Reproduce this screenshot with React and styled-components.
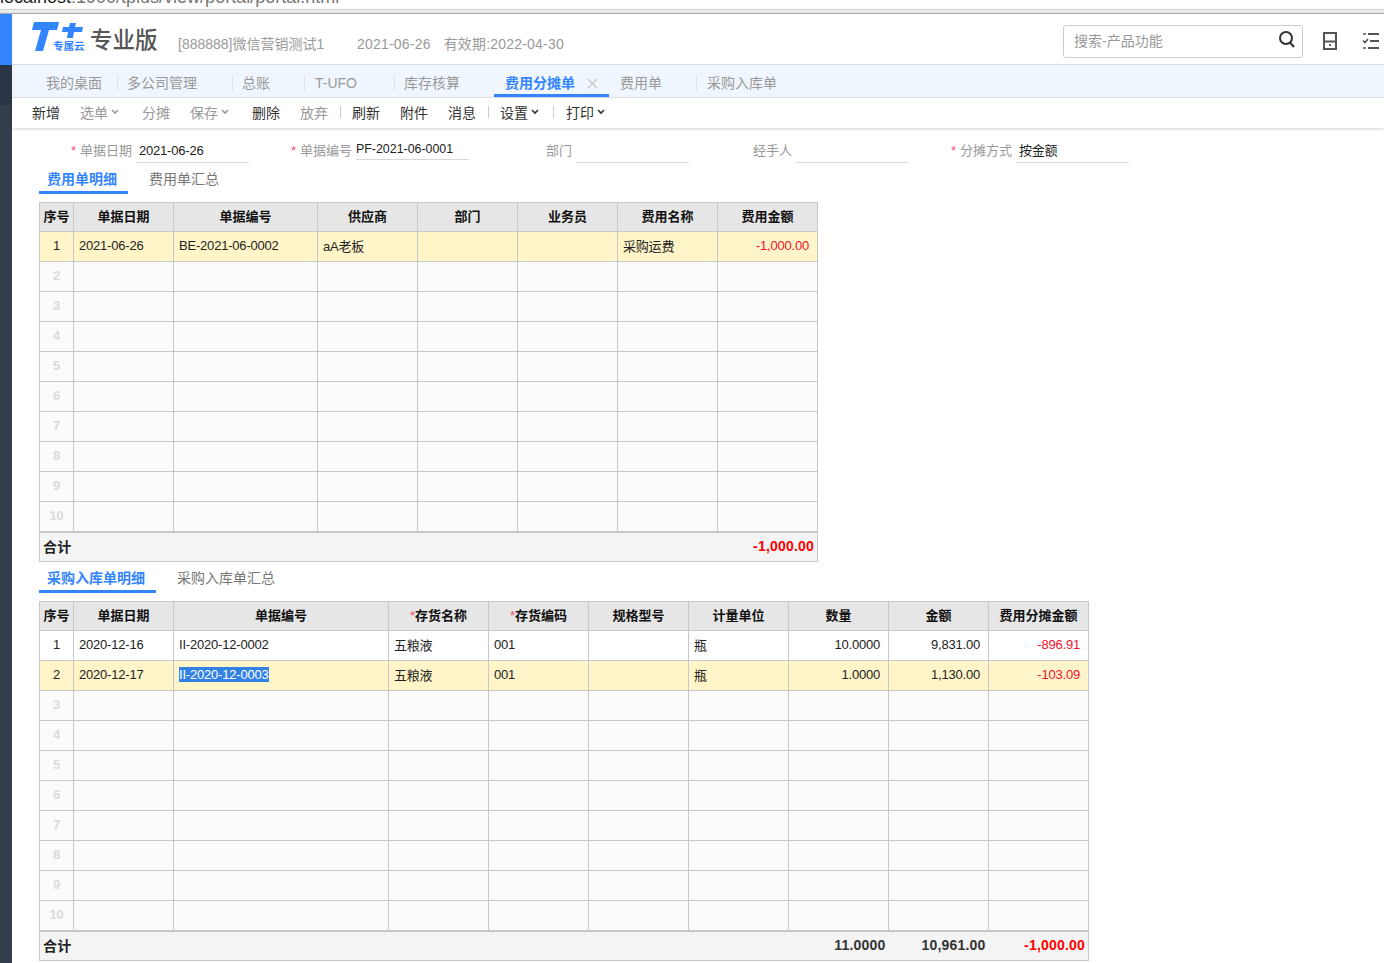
import styled, { createGlobalStyle } from 'styled-components';

const GlobalStyle = createGlobalStyle`
  html, body {
    margin: 0;
    padding: 0;
    background: #fff;
    overflow: hidden;
  }
  body {
    font-family: 'Liberation Sans', 'Noto Sans CJK SC', sans-serif;
    font-size: 13px;
    color: #333;
  }
`;

const UrlBar = styled.div`
  height: 9px;
  overflow: hidden;
  font-size: 18px;
  line-height: 18px;
  color: #777;
  white-space: nowrap;
  border-bottom: 1px solid #cfcfcf;
  b {
    font-weight: normal;
    color: #222;
  }
`;

const UrlText = styled.div`
  margin-top: -12px;
`;

const UrlShade = styled.div`
  height: 4px;
  background: linear-gradient(#f0f0f0, #e2e2e2);
  border-bottom: 1px solid #aaa;
  box-sizing: border-box;
`;

const Shell = styled.div`
  display: flex;
  height: 949px;
  overflow: hidden;
`;

const Rail = styled.div`
  width: 12px;
  flex: none;
  background: linear-gradient(
    #3385ff 0 51px,
    #2a3646 51px 91px,
    #343f4d 91px
  );
`;

const Main = styled.div`
  flex: 1;
  min-width: 0;
`;

const Header = styled.div`
  height: 51px;
  padding-bottom: 1px;
  display: flex;
  align-items: center;
  box-sizing: border-box;
  border-bottom: 1px solid #dcdcdc;
`;

const Logo = styled.div`
  width: 60px;
  height: 36px;
  margin: -2px 0 0 19px;
  flex: none;
`;

const Edition = styled.div`
  font-size: 22.5px;
  font-weight: 500;
  color: #555;
  width: 87px;
  flex: none;
  margin-top: -1px;
  margin-left: -1px;
  margin-right: 1px;
  white-space: nowrap;
`;

const Company = styled.div`
  font-size: 14px;
  color: #9a9a9a;
  width: 179px;
  flex: none;
  margin-top: 8px;
`;

const DateInfo = styled.div`
  font-size: 14px;
  letter-spacing: 0.2px;
  color: #999;
  flex: 1;
  margin-top: 8px;
  span {
    margin-left: 13px;
  }
`;

const Search = styled.div`
  width: 240px;
  height: 33px;
  flex: none;
  box-sizing: border-box;
  border: 1px solid #ccc;
  border-radius: 3px;
  display: flex;
  align-items: center;
  justify-content: space-between;
  padding: 0 5px 3px 10px;
  font-size: 14px;
  color: #999;
  margin-top: 6px;
`;

const HeaderIcons = styled.div`
  display: flex;
  align-items: center;
  gap: 24px;
  width: 62px;
  margin-left: 19px;
  margin-top: 4px;
  flex: none;
  overflow: hidden;
`;

const Tabs = styled.div`
  height: 33px;
  display: flex;
  align-items: stretch;
  background: #f0f6fd;
  border-bottom: 1px solid #dfe5ec;
  box-sizing: border-box;
  padding-left: 34px;
`;

const Tab = styled.div`
  width: ${p => p.$w}px;
  flex: none;
  box-sizing: border-box;
  font-size: 14px;
  line-height: 36px;
  color: ${p => (p.$active ? '#3385ff' : '#999')};
  font-weight: ${p => (p.$active ? 'bold' : 'normal')};
  padding-left: ${p => p.$pad || 0}px;
  position: relative;
  border-bottom: ${p => (p.$active ? '3px solid #3385ff' : 'none')};
  &::after {
    content: '';
    display: ${p => (p.$sep ? 'block' : 'none')};
    position: absolute;
    right: 0;
    top: 10px;
    height: 16px;
    width: 1px;
    background: #dfe3e8;
  }
`;

const CloseMark = styled.span`
  position: absolute;
  right: 11px;
  top: 13px;
  line-height: 0;
`;

const Toolbar = styled.div`
  height: 30px;
  box-sizing: border-box;
  padding: 0 0 2px 20px;
  display: flex;
  align-items: center;
  box-shadow: 0 1px 3px rgba(0, 0, 0, 0.18);
  font-size: 14px;
  color: #333;
  position: relative;
`;

const ToolItem = styled.div`
  display: flex;
  align-items: center;
  gap: 3px;
  margin-right: ${p => p.$gap}px;
  color: ${p => (p.$off ? '#999' : '#333')};
`;

const ToolSep = styled.div`
  width: 1px;
  height: 12px;
  background: #ccc;
  margin-right: ${p => p.$gap}px;
`;

const Content = styled.div`
  padding: 14px 0 0 27px;
`;

const FormRow = styled.div`
  display: flex;
  height: 22px;
`;

const Field = styled.div`
  width: ${p => p.$w}px;
  flex: none;
  display: flex;
  align-items: flex-start;
  justify-content: flex-end;
  gap: 4px;
`;

const Label = styled.div`
  font-size: 13px;
  line-height: 18px;
  color: #999;
  i {
    font-style: normal;
    color: #f0506e;
    margin-right: 4px;
  }
`;

const Input = styled.div`
  width: 113px;
  height: ${p => p.$h || 21}px;
  box-sizing: border-box;
  border-bottom: 1px solid #d8d8d8;
  padding-left: ${p => p.$pad ?? 3}px;
  line-height: ${p => p.$lh || 18}px;
  font-size: ${p => p.$fs || 13}px;
  letter-spacing: ${p => (p.$fs ? 0 : -0.2)}px;
  color: #222;
`;

const SubTabs = styled.div`
  display: flex;
  height: 24px;
  margin-top: ${p => p.$top}px;
  margin-bottom: 8px;
`;

const SubTab = styled.div`
  box-sizing: border-box;
  height: 24px;
  padding: 0 11px 0 8px;
  margin-right: ${p => (p.$active ? 13 : 0)}px;
  line-height: 19px;
  font-size: 14px;
  color: ${p => (p.$active ? '#3385ff' : '#777')};
  font-weight: ${p => (p.$active ? 'bold' : 'normal')};
  border-bottom: ${p => (p.$active ? '3px solid #3385ff' : 'none')};
`;

const Sheet = styled.table`
  border-collapse: collapse;
  table-layout: fixed;
  width: ${p => p.$w}px;
  font-size: 13px;
  letter-spacing: -0.2px;
  color: #222;
  td, th {
    border: 1px solid #c8c8c8;
    height: 30px;
    padding: 0 5px 2px;
    box-sizing: border-box;
    overflow: hidden;
    white-space: nowrap;
  }
  th {
    background: #e6e6e6;
    height: 29px;
    font-size: 13px;
    letter-spacing: 0;
    color: #111;
    font-weight: bold;
    padding: 0 0 4px;
    text-align: center;
  }
  th i {
    font-style: normal;
    color: #f0506e;
    font-weight: normal;
  }
`;

const Row = styled.tr`
  background: ${p => (p.$active ? '#fff5c8' : p.$blank ? '#fbfbfb' : '#fff')};
`;

const NumCell = styled.td`
  text-align: center;
  color: ${p => (p.$blank ? '#dadada' : '#222')};
  font-weight: ${p => (p.$blank ? 'bold' : 'normal')};
`;

const Cell = styled.td`
  text-align: ${p => (p.$right ? 'right' : 'left')};
  color: ${p => (p.$red ? '#f5102d' : '#222')};
  && {
    padding-right: ${p => (p.$right ? 8 : 5)}px;
  }
`;

const TotalRow = styled.tr`
  background: #f4f4f4;
  td {
    border-left: none;
    border-right: none;
    border-top: 2px solid #c8c8c8;
    height: 30px;
    font-weight: bold;
    font-size: 14px;
    letter-spacing: 0.2px;
    padding: 0 3px 2px;
  }
  td:first-child {
    border-left: 1px solid #c8c8c8;
  }
  td:last-child {
    border-right: 1px solid #c8c8c8;
  }
`;

const TotalCell = styled.td`
  text-align: right;
  color: ${p => (p.$red ? '#f00' : '#333')};
`;

const Selected = styled.span`
  background: #3282e6;
  color: #fff;
`;

const Caret = () => (
  <svg width="8" height="6" viewBox="0 0 8 6">
    <path d="M1 1l3 3 3-3" fill="none" stroke="currentColor" strokeWidth="1.6" />
  </svg>
);

const topCols = [34, 100, 144, 100, 100, 100, 100, 100];
const topHead = ['序号', '单据日期', '单据编号', '供应商', '部门', '业务员', '费用名称', '费用金额'];
const bottomCols = [34, 100, 215, 100, 100, 100, 100, 100, 100, 100];
const bottomHead = [
  '序号',
  '单据日期',
  '单据编号',
  <><i>*</i>存货名称</>,
  <><i>*</i>存货编码</>,
  '规格型号',
  '计量单位',
  '数量',
  '金额',
  '费用分摊金额',
];
const blankRows = n => Array.from({ length: n }, (_, i) => i);

export default function App() {
  return (
    <>
      <GlobalStyle />
      <UrlBar>
        <UrlText><b>localhost</b>:1900/tplus/view/portal/portal.html</UrlText>
      </UrlBar>
      <UrlShade />
      <Shell>
        <Rail />
        <Main>
          <Header>
            <Logo>
              <svg width="60" height="36" viewBox="0 0 60 36">
                <path d="M3 2h25l-2 8h-8l-6 21H4l6-21H1z" fill="#3385ff" />
                <path d="M39 3h6l-1 4h8l-1 5h-8l-1 6h-6l1-6h-6l1-5h6z" fill="#3385ff" />
                <text x="22" y="30" fontSize="10.5" fontWeight="bold" fill="#3385ff">专属云</text>
              </svg>
            </Logo>
            <Edition>专业版</Edition>
            <Company>[888888]微信营销测试1</Company>
            <DateInfo>2021-06-26<span>有效期:2022-04-30</span></DateInfo>
            <Search>
              搜索-产品功能
              <svg width="20" height="20" viewBox="0 0 20 20">
                <circle cx="9" cy="8" r="6" fill="none" stroke="#333" strokeWidth="2" />
                <path d="M13 12.5l4 4.5" stroke="#333" strokeWidth="2.2" />
              </svg>
            </Search>
            <HeaderIcons>
              <svg width="16" height="18" viewBox="0 0 16 18" style={{ flex: 'none' }}>
                <path d="M2 1h12v16H2zM2 9.5h12" fill="none" stroke="#555" strokeWidth="2" />
                <path d="M7 12h2v2H7z" fill="#555" />
              </svg>
              <svg width="18" height="18" viewBox="0 0 18 18" style={{ flex: 'none' }}>
                <path d="M6 2h11M8 9h9M6 16h11" stroke="#555" strokeWidth="2" />
                <path d="M1 2h3M1 16h3M1 8.5l2 2 3-3.5" fill="none" stroke="#555" strokeWidth="1.7" />
              </svg>
            </HeaderIcons>
          </Header>
          <Tabs>
            <Tab $w={72} $sep>我的桌面</Tab>
            <Tab $w={115} $pad={9} $sep>多公司管理</Tab>
            <Tab $w={72} $pad={9} $sep>总账</Tab>
            <Tab $w={90} $pad={10} $sep>T-UFO</Tab>
            <Tab $w={99} $pad={9}>库存核算</Tab>
            <Tab $w={115} $pad={11} $active>
              费用分摊单
              <CloseMark>
                <svg width="11" height="11" viewBox="0 0 11 11">
                  <path d="M1 1l9 9M10 1l-9 9" stroke="#c4c4c4" strokeWidth="1.2" />
                </svg>
              </CloseMark>
            </Tab>
            <Tab $w={88} $pad={11} $sep>费用单</Tab>
            <Tab $w={90} $pad={10}>采购入库单</Tab>
          </Tabs>
          <Toolbar>
            <ToolItem $gap={20}>新增</ToolItem>
            <ToolItem $gap={23} $off>选单<Caret /></ToolItem>
            <ToolItem $gap={20} $off>分摊</ToolItem>
            <ToolItem $gap={23} $off>保存<Caret /></ToolItem>
            <ToolItem $gap={20}>删除</ToolItem>
            <ToolItem $gap={12} $off>放弃</ToolItem>
            <ToolSep $gap={11} />
            <ToolItem $gap={20}>刷新</ToolItem>
            <ToolItem $gap={20}>附件</ToolItem>
            <ToolItem $gap={12}>消息</ToolItem>
            <ToolSep $gap={11} />
            <ToolItem $gap={14}>设置<Caret /></ToolItem>
            <ToolSep $gap={12} />
            <ToolItem $gap={0}>打印<Caret /></ToolItem>
          </Toolbar>
          <Content>
            <FormRow>
              <Field $w={210}>
                <Label><i>*</i>单据日期</Label>
                <Input>2021-06-26</Input>
              </Field>
              <Field $w={220}>
                <Label><i>*</i>单据编号</Label>
                <Input $h={18} $lh={15} $fs={12.4} $pad={0}>PF-2021-06-0001</Input>
              </Field>
              <Field $w={220}>
                <Label>部门</Label>
                <Input />
              </Field>
              <Field $w={220}>
                <Label>经手人</Label>
                <Input />
              </Field>
              <Field $w={220}>
                <Label><i>*</i>分摊方式</Label>
                <Input>按金额</Input>
              </Field>
            </FormRow>
            <SubTabs $top={6}>
              <SubTab $active>费用单明细</SubTab>
              <SubTab>费用单汇总</SubTab>
            </SubTabs>
            <Sheet $w={779}>
              <colgroup>{topCols.map((w, i) => <col key={i} width={w} />)}</colgroup>
              <thead>
                <tr>{topHead.map((h, i) => <th key={i}>{h}</th>)}</tr>
              </thead>
              <tbody>
                <Row $active>
                  <NumCell>1</NumCell>
                  <Cell>2021-06-26</Cell>
                  <Cell>BE-2021-06-0002</Cell>
                  <Cell>aA老板</Cell>
                  <Cell />
                  <Cell />
                  <Cell>采购运费</Cell>
                  <Cell $right $red>-1,000.00</Cell>
                </Row>
                {blankRows(9).map(i => (
                  <Row key={i} $blank>
                    <NumCell $blank>{i + 2}</NumCell>
                    {topCols.slice(1).map((_, c) => <Cell key={c} />)}
                  </Row>
                ))}
                <TotalRow>
                  <td colSpan={7}>合计</td>
                  <TotalCell $red>-1,000.00</TotalCell>
                </TotalRow>
              </tbody>
            </Sheet>
            <SubTabs $top={7}>
              <SubTab $active>采购入库单明细</SubTab>
              <SubTab>采购入库单汇总</SubTab>
            </SubTabs>
            <Sheet $w={1050}>
              <colgroup>{bottomCols.map((w, i) => <col key={i} width={w} />)}</colgroup>
              <thead>
                <tr>{bottomHead.map((h, i) => <th key={i}>{h}</th>)}</tr>
              </thead>
              <tbody>
                <Row>
                  <NumCell>1</NumCell>
                  <Cell>2020-12-16</Cell>
                  <Cell>II-2020-12-0002</Cell>
                  <Cell>五粮液</Cell>
                  <Cell>001</Cell>
                  <Cell />
                  <Cell>瓶</Cell>
                  <Cell $right>10.0000</Cell>
                  <Cell $right>9,831.00</Cell>
                  <Cell $right $red>-896.91</Cell>
                </Row>
                <Row $active>
                  <NumCell>2</NumCell>
                  <Cell>2020-12-17</Cell>
                  <Cell><Selected>II-2020-12-0003</Selected></Cell>
                  <Cell>五粮液</Cell>
                  <Cell>001</Cell>
                  <Cell />
                  <Cell>瓶</Cell>
                  <Cell $right>1.0000</Cell>
                  <Cell $right>1,130.00</Cell>
                  <Cell $right $red>-103.09</Cell>
                </Row>
                {blankRows(8).map(i => (
                  <Row key={i} $blank>
                    <NumCell $blank>{i + 3}</NumCell>
                    {bottomCols.slice(1).map((_, c) => <Cell key={c} />)}
                  </Row>
                ))}
                <TotalRow>
                  <td colSpan={7}>合计</td>
                  <TotalCell>11.0000</TotalCell>
                  <TotalCell>10,961.00</TotalCell>
                  <TotalCell $red>-1,000.00</TotalCell>
                </TotalRow>
              </tbody>
            </Sheet>
          </Content>
        </Main>
      </Shell>
    </>
  );
}
